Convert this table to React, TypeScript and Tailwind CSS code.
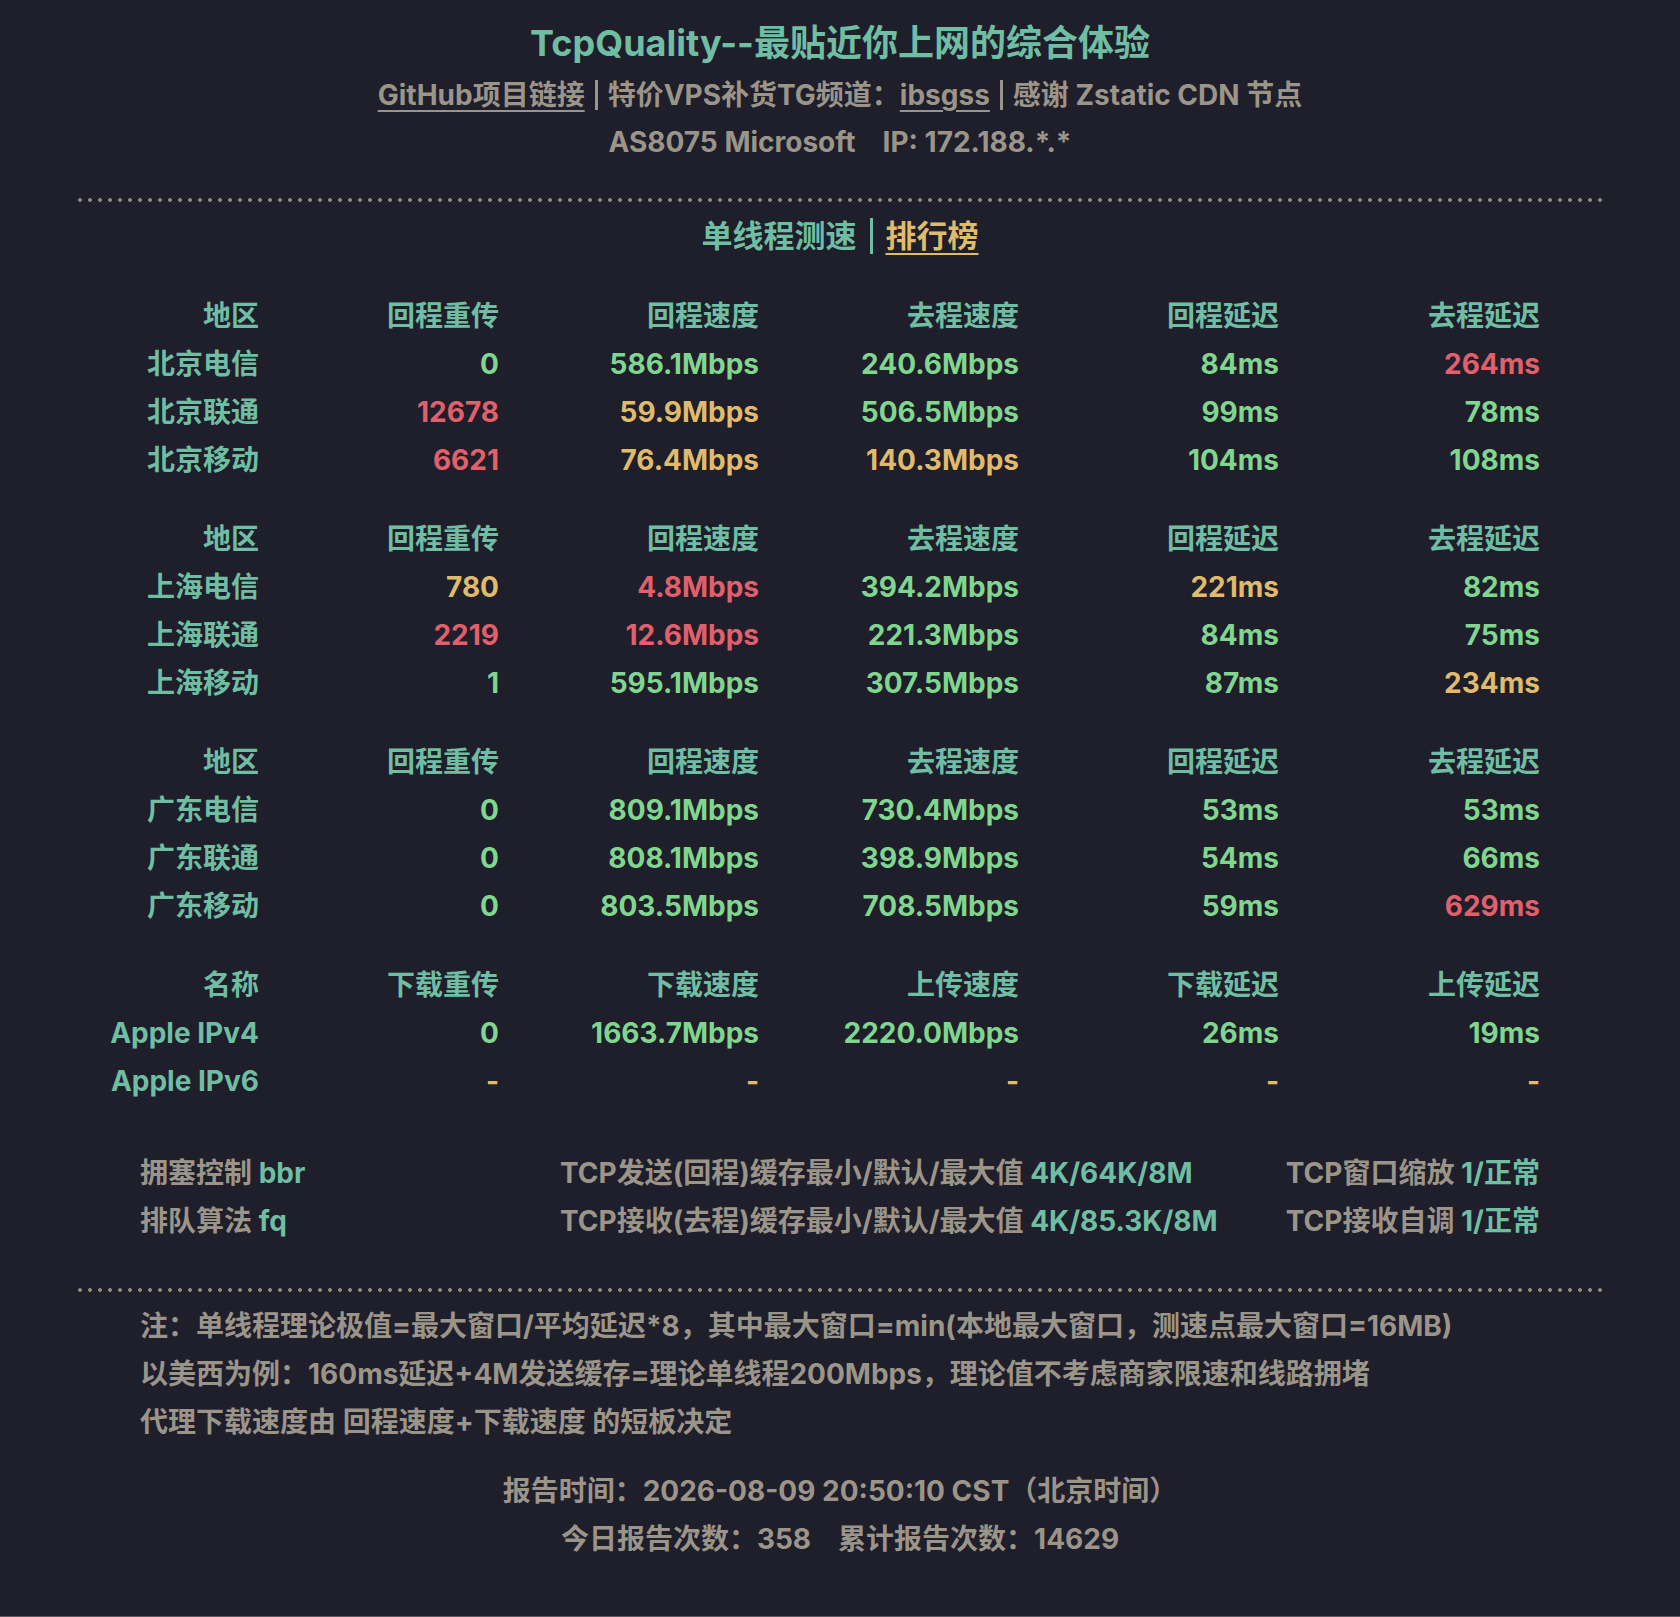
type Tone = "g" | "y" | "r";
type Row = { name: string; cells: [string, Tone][] };

const toneClass: Record<Tone, string> = {
  g: "text-[#80d68e]",
  y: "text-[#dfbb6b]",
  r: "text-[#e1606c]",
};

const groups: { head: string[]; rows: Row[] }[] = [
  {
    head: ["地区", "回程重传", "回程速度", "去程速度", "回程延迟", "去程延迟"],
    rows: [
      { name: "北京电信", cells: [["0", "g"], ["586.1Mbps", "g"], ["240.6Mbps", "g"], ["84ms", "g"], ["264ms", "r"]] },
      { name: "北京联通", cells: [["12678", "r"], ["59.9Mbps", "y"], ["506.5Mbps", "g"], ["99ms", "g"], ["78ms", "g"]] },
      { name: "北京移动", cells: [["6621", "r"], ["76.4Mbps", "y"], ["140.3Mbps", "y"], ["104ms", "g"], ["108ms", "g"]] },
    ],
  },
  {
    head: ["地区", "回程重传", "回程速度", "去程速度", "回程延迟", "去程延迟"],
    rows: [
      { name: "上海电信", cells: [["780", "y"], ["4.8Mbps", "r"], ["394.2Mbps", "g"], ["221ms", "y"], ["82ms", "g"]] },
      { name: "上海联通", cells: [["2219", "r"], ["12.6Mbps", "r"], ["221.3Mbps", "g"], ["84ms", "g"], ["75ms", "g"]] },
      { name: "上海移动", cells: [["1", "g"], ["595.1Mbps", "g"], ["307.5Mbps", "g"], ["87ms", "g"], ["234ms", "y"]] },
    ],
  },
  {
    head: ["地区", "回程重传", "回程速度", "去程速度", "回程延迟", "去程延迟"],
    rows: [
      { name: "广东电信", cells: [["0", "g"], ["809.1Mbps", "g"], ["730.4Mbps", "g"], ["53ms", "g"], ["53ms", "g"]] },
      { name: "广东联通", cells: [["0", "g"], ["808.1Mbps", "g"], ["398.9Mbps", "g"], ["54ms", "g"], ["66ms", "g"]] },
      { name: "广东移动", cells: [["0", "g"], ["803.5Mbps", "g"], ["708.5Mbps", "g"], ["59ms", "g"], ["629ms", "r"]] },
    ],
  },
  {
    head: ["名称", "下载重传", "下载速度", "上传速度", "下载延迟", "上传延迟"],
    rows: [
      { name: "Apple IPv4", cells: [["0", "g"], ["1663.7Mbps", "g"], ["2220.0Mbps", "g"], ["26ms", "g"], ["19ms", "g"]] },
      { name: "Apple IPv6", cells: [["-", "y"], ["-", "y"], ["-", "y"], ["-", "y"], ["-", "y"]] },
    ],
  },
];

function Dots() {
  return (
    <div className="mx-[75px] h-[4px] bg-[radial-gradient(circle,#8d877c_1.6px,transparent_2.2px)] bg-[length:10px_4px]" />
  );
}

function Bar({ className }: { className: string }) {
  return <span className={`inline-block w-[3px] align-middle ${className}`} />;
}

export default function App() {
  return (
    <div className="h-[1617px] border-b border-[#5b5a63] bg-[#1f1e2b] font-['Inter','Noto_Sans_CJK_SC',sans-serif] font-bold text-[#9b9589]">
      {/* header */}
      <div className="pt-[17px] text-center">
        <h1 className="h-[54px] text-[36px] leading-[52px] text-[#6fbea3]">TcpQuality--最贴近你上网的综合体验</h1>
        <div className="flex h-[47px] items-center justify-center text-[28px] leading-[48px]">
          <span className="underline decoration-2 underline-offset-[5px]">GitHub项目链接</span>
          <Bar className="mx-[10px] h-[30px] bg-[#9b9589]" />
          <span>特价VPS补货TG频道：</span>
          <span className="underline decoration-2 underline-offset-[5px]">ibsgss</span>
          <Bar className="mx-[10px] h-[30px] bg-[#9b9589]" />
          <span>感谢 Zstatic CDN 节点</span>
        </div>
        <div className="h-[48px] text-[28px] leading-[48px]">
          AS8075 Microsoft<span className="ml-[27px]">IP: 172.188.*.*</span>
        </div>
      </div>

      <div className="mt-[32px]">
        <Dots />
      </div>

      <div className="mt-[10px] flex h-[48px] items-center justify-center text-[31px]">
        <span className="text-[#6fbea3]">单线程测速</span>
        <Bar className="mx-[13px] h-[36px] bg-[#6fbea3]" />
        <span className="text-[#dfbb6b] underline decoration-2 underline-offset-[6px]">排行榜</span>
      </div>

      {/* table */}
      <div className="ml-[100px] mt-[32px] flex flex-col gap-[31px] text-[28px] leading-[48px]">
        {groups.map((g, gi) => (
          <div key={gi} className="grid grid-cols-[159px_240px_260px_260px_260px_261px] text-right">
            {g.head.map((h) => (
              <div key={h} className="text-[#6fbea3]">{h}</div>
            ))}
            {g.rows.map((r) => (
              <div key={r.name} className="contents">
                <div className="whitespace-nowrap text-[#6fbea3]">{r.name}</div>
                {r.cells.map(([v, t], i) => (
                  <div key={i} className={toneClass[t]}>{v}</div>
                ))}
              </div>
            ))}
          </div>
        ))}
      </div>

      {/* settings */}
      <div className="mx-auto mt-[44px] grid w-[1400px] grid-cols-[420px_1fr_auto] text-[28px] leading-[48px]">
        <div>拥塞控制 <span className="text-[#6fbea3]">bbr</span></div>
        <div>TCP发送(回程)缓存最小/默认/最大值 <span className="text-[#6fbea3]">4K/64K/8M</span></div>
        <div className="text-right">TCP窗口缩放 <span className="text-[#6fbea3]">1/正常</span></div>
        <div>排队算法 <span className="text-[#6fbea3]">fq</span></div>
        <div>TCP接收(去程)缓存最小/默认/最大值 <span className="text-[#6fbea3]">4K/85.3K/8M</span></div>
        <div className="text-right">TCP接收自调 <span className="text-[#6fbea3]">1/正常</span></div>
      </div>

      <div className="mt-[43px]">
        <Dots />
      </div>

      {/* notes */}
      <div className="mx-auto mt-[10px] w-[1400px] text-[28px] leading-[48px]">
        <p>注：单线程理论极值=最大窗口/平均延迟*8，其中最大窗口=min(本地最大窗口，测速点最大窗口=16MB)</p>
        <p>以美西为例：160ms延迟+4M发送缓存=理论单线程200Mbps，理论值不考虑商家限速和线路拥堵</p>
        <p>代理下载速度由 回程速度+下载速度 的短板决定</p>
      </div>

      {/* footer */}
      <div className="mt-[21px] text-center text-[28px] leading-[48px]">
        <p>报告时间：2026-08-09 20:50:10 CST（北京时间）</p>
        <p>
          今日报告次数：358<span className="ml-[27px]">累计报告次数：14629</span>
        </p>
      </div>
    </div>
  );
}
